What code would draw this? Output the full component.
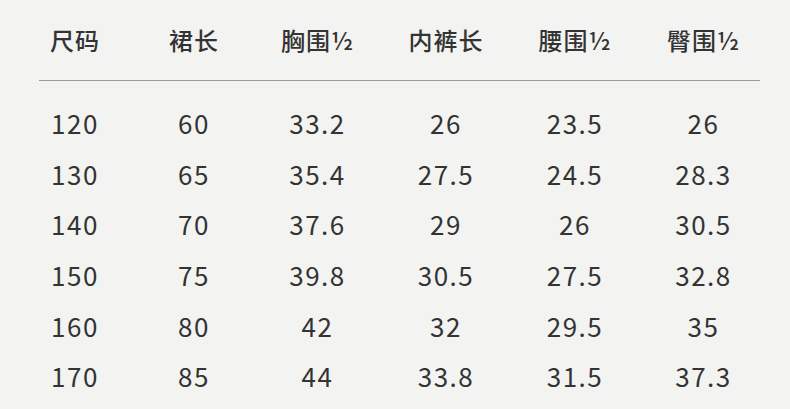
import React from "react";

const headers = ["尺码", "裙长", "胸围½", "内裤长", "腰围½", "臀围½"];

const rows = [
    ["120", "60", "33.2", "26", "23.5", "26"],
    ["130", "65", "35.4", "27.5", "24.5", "28.3"],
    ["140", "70", "37.6", "29", "26", "30.5"],
    ["150", "75", "39.8", "30.5", "27.5", "32.8"],
    ["160", "80", "42", "32", "29.5", "35"],
    ["170", "85", "44", "33.8", "31.5", "37.3"],
];

const cols = "grid grid-cols-[118px_120px_127px_130px_128px_129px]";

const App = () => {
    return (
        <div
            className="w-[790px] h-[409px] bg-[#f3f3f2] text-[#333333] overflow-hidden"
            style={{ fontFamily: '"Noto Sans CJK SC", "Noto Sans", sans-serif' }}
        >
            {/* cabecera */}
            <div className={`${cols} px-[16px] h-[80px] items-center`}>
                {headers.map((h, i) => (
                    <div key={i} className="text-center text-[24px] font-medium tracking-[1px]">
                        {h}
                    </div>
                ))}
            </div>
            <div className="ml-[39px] mr-[30px] h-px bg-[#9a9a9a]" />

            {/* filas */}
            <div className="mt-[17px] px-[16px]">
                {rows.map((r, i) => (
                    <div key={i} className={`${cols} h-[50.6px] items-center`}>
                        {r.map((v, j) => (
                            <div key={j} className="text-center text-[26px] leading-none tracking-[1.5px]">
                                {v}
                            </div>
                        ))}
                    </div>
                ))}
            </div>
        </div>
    );
};

export default App;
